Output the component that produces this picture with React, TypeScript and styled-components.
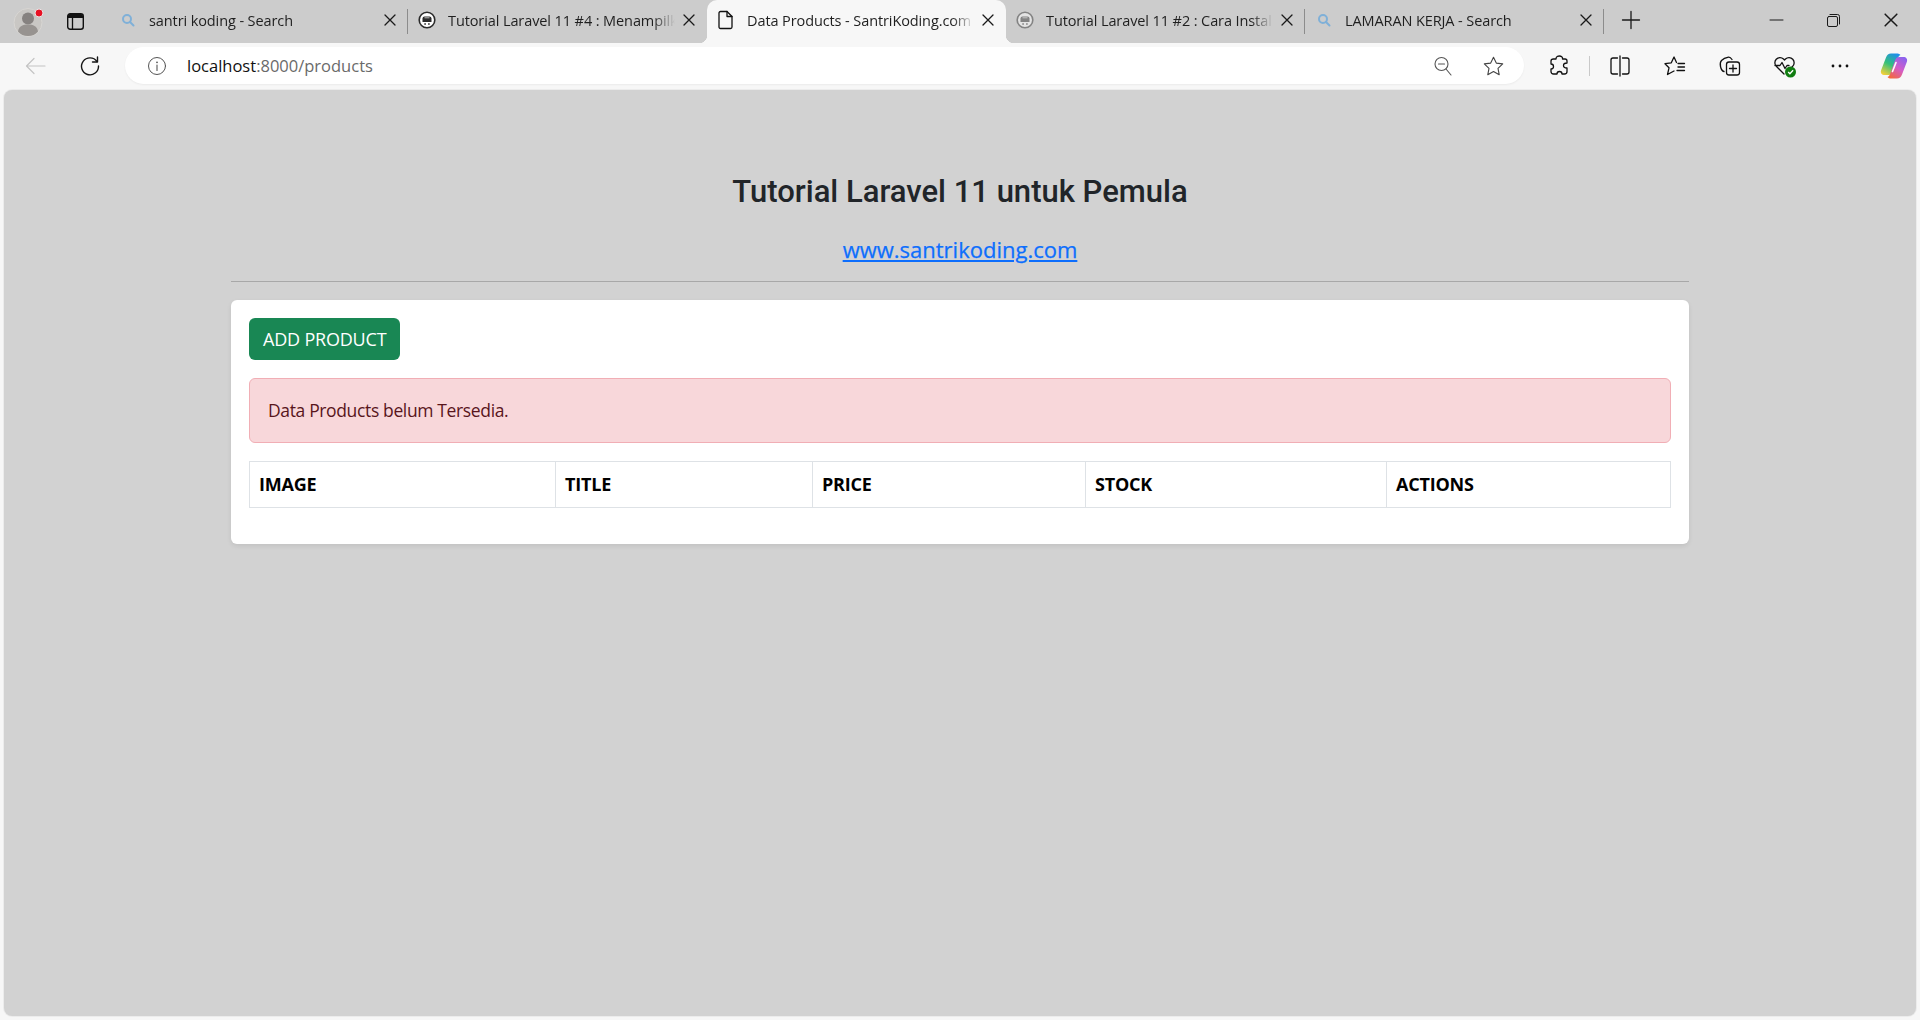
import React from 'react';
import styled, { createGlobalStyle } from 'styled-components';

const GlobalStyle = createGlobalStyle`
  html, body {
    margin: 0;
    height: 100%;
    overflow: hidden;
  }
  #root {
    height: 100%;
  }
  * {
    box-sizing: border-box;
  }
`;

const UI_FONT = `"Open Sans", "Noto Sans", "Liberation Sans", sans-serif`;

const Browser = styled.div`
  display: flex;
  flex-direction: column;
  height: 1020px;
  background: #f7f7f7;
  font-family: ${UI_FONT};
`;

const TabStrip = styled.div`
  display: flex;
  align-items: center;
  height: 43px;
  background: #cccccc;
  flex-shrink: 0;
`;

const ProfileSlot = styled.div`
  width: 55px;
  display: flex;
  justify-content: center;
`;

const VerticalTabsSlot = styled.div`
  width: 54px;
  display: flex;
  padding-left: 12px;
`;

const Tab = styled.div<{ $active?: boolean; $divider?: boolean }>`
  position: relative;
  width: 299px;
  height: 43px;
  display: flex;
  align-items: center;
  padding: 0 12px 3px 10px;
  border-radius: 10px 10px 0 0;
  background: ${(p) => (p.$active ? '#f7f7f7' : 'transparent')};

  ${(p) =>
    p.$divider &&
    `
    &::after {
      content: '';
      position: absolute;
      right: 0;
      top: 9px;
      width: 1px;
      height: 25px;
      background: #8c8c8c;
    }
  `}

  ${(p) =>
    p.$active &&
    `
    &::before,
    &::after {
      content: '';
      position: absolute;
      bottom: 0;
      width: 8px;
      height: 8px;
    }
    &::before {
      left: -8px;
      background: radial-gradient(circle at 0 0, transparent 8px, #f7f7f7 8.5px);
    }
    &::after {
      right: -8px;
      background: radial-gradient(circle at 100% 0, transparent 8px, #f7f7f7 8.5px);
    }
  `}
`;

const TabIcon = styled.div<{ $dim?: boolean }>`
  width: 18px;
  height: 18px;
  display: flex;
  align-items: center;
  justify-content: center;
  flex-shrink: 0;
  opacity: ${(p) => (p.$dim ? 0.45 : 1)};
`;

const TabTitle = styled.div`
  flex: 1;
  min-width: 0;
  margin-left: 12px;
  font-size: 14.5px;
  letter-spacing: -0.1px;
  color: #1f1f1f;
  white-space: nowrap;
  overflow: hidden;
  -webkit-mask-image: linear-gradient(to right, #000 calc(100% - 22px), transparent);
  mask-image: linear-gradient(to right, #000 calc(100% - 22px), transparent);
`;

const TabClose = styled.div`
  width: 12px;
  height: 12px;
  margin-left: 8px;
  display: flex;
  flex-shrink: 0;
`;

const NewTabSlot = styled.div`
  width: 54px;
  display: flex;
  justify-content: center;
  padding-bottom: 3px;
`;

const WindowControls = styled.div`
  margin-left: auto;
  display: flex;
  align-items: center;
  padding-bottom: 3px;
`;

const WindowButton = styled.div`
  width: 57.5px;
  display: flex;
  justify-content: center;
`;

const Toolbar = styled.div`
  display: flex;
  align-items: center;
  height: 47px;
  flex-shrink: 0;
  padding: 0 0 2px 8px;
`;

const ToolSlot = styled.div<{ $width?: number; $nudge?: number }>`
  width: ${(p) => p.$width ?? 55}px;
  height: 36px;
  display: flex;
  align-items: center;
  justify-content: center;
  flex-shrink: 0;
  padding-right: ${(p) => p.$nudge ?? 0}px;
`;

const AddressBar = styled.div`
  width: 1399px;
  height: 37px;
  margin: 0 7px;
  border-radius: 19px;
  background: #ffffff;
  box-shadow: 0 1px 2px rgba(0, 0, 0, 0.05);
  display: flex;
  align-items: center;
  flex-shrink: 0;
  padding: 0 20px 0 22px;
`;

const Url = styled.div`
  margin-left: 20px;
  flex: 1;
  font-size: 16.5px;
  color: #6a6a6a;
`;

const UrlHost = styled.span`
  color: #111111;
`;

const AddressActions = styled.div`
  display: flex;
  align-items: center;
  gap: 31px;
`;

const ToolDivider = styled.div`
  width: 1px;
  height: 20px;
  background: #c9c9c9;
  margin: 0 2px 0 3px;
`;

const Viewport = styled.main`
  flex: 1;
  margin: 0 4px 4px;
  background: #d2d2d2;
  border-radius: 8px;
  box-shadow: 0 0 0 1px #ececec;
  min-height: 0;
`;

const Container = styled.div`
  width: 1458px;
  margin: 0 auto;
  padding-top: 79px;
`;

const PageHeader = styled.div`
  text-align: center;
`;

const PageTitle = styled.h3`
  margin: 0 0 20px;
  font-family: Roboto, ${UI_FONT};
  font-size: 31px;
  line-height: 46px;
  font-weight: 500;
  color: #212529;
`;

const SiteLink = styled.a`
  display: block;
  width: fit-content;
  margin: 0 auto;
  font-size: 22px;
  line-height: 29px;
  font-weight: 400;
  color: #0d6efd;
  text-decoration: underline;
  -webkit-text-stroke: 0.25px #0d6efd;
`;

const Rule = styled.hr`
  margin: 17px 0 18px;
  border: 0;
  border-top: 1px solid #a8a8a8;
`;

const Card = styled.div`
  height: 244px;
  background: #ffffff;
  border-radius: 6px;
  box-shadow: 0 2px 5px rgba(0, 0, 0, 0.08);
  padding: 18px;
`;

const AddButton = styled.a`
  display: inline-block;
  height: 42px;
  padding: 0 14px;
  line-height: 42px;
  background: #198754;
  border-radius: 6px;
  font-size: 18px;
  color: #ffffff;
  letter-spacing: -0.2px;
`;

const Alert = styled.div`
  height: 65px;
  margin-top: 18px;
  padding: 0 18px 2px;
  display: flex;
  align-items: center;
  border: 1px solid #f1aeb5;
  border-radius: 6px;
  background: #f8d7da;
  color: #58151c;
  font-size: 17.5px;
  letter-spacing: -0.36px;
`;

const Table = styled.table`
  width: 1421px;
  margin-top: 18px;
  border-collapse: collapse;
  table-layout: fixed;
`;

const Col = styled.col<{ $w: number }>`
  width: ${(p) => p.$w}px;
`;

const HeadCell = styled.th`
  height: 46px;
  padding: 0 9px 1px;
  border: 1px solid #dee2e6;
  font-size: 18px;
  font-weight: 700;
  text-align: left;
  color: #000000;
  letter-spacing: -0.2px;
`;

const Svg = styled.svg`
  display: block;
  overflow: visible;
`;

const stroke = {
  fill: 'none',
  stroke: 'currentColor',
  strokeLinecap: 'round' as const,
  strokeLinejoin: 'round' as const,
};

const Avatar = () => (
  <Svg width={30} height={30} viewBox="0 0 30 30">
    <circle cx="15" cy="15.500" r="14" fill="#c9c7c4" stroke="#d8d6d3" />
    <circle cx="15" cy="11.500" r="6" fill="#868280" />
    <path d="M5 24.500c1-5.500 5-7 10-7s9 1.500 10 7c-2.500 3-6 4.500-10 4.500s-7.500-1.500-10-4.500z" fill="#979390" />
    <circle cx="26" cy="6" r="4" fill="#e81123" stroke="#e6e6e6" strokeWidth="1" />
  </Svg>
);

const VerticalTabsIcon = () => (
  <Svg width={17} height={17} viewBox="0 0 17 17" color="#111">
    <rect x="0.700" y="0.700" width="15.600" height="15.600" rx="2.500" {...stroke} strokeWidth={1.400} />
    <path d="M1 3a2 2 0 0 1 2-2h11a2 2 0 0 1 2 2v2H1z" fill="#111" />
    <path d="M5.500 5v11" {...stroke} strokeWidth={1.300} />
  </Svg>
);

const SearchFavicon = () => (
  <Svg width={14} height={14} viewBox="0 0 14 14" color="#7fb0d8">
    <circle cx="6" cy="6" r="4" {...stroke} strokeWidth={2} />
    <path d="M9 9l3.500 3.500" {...stroke} strokeWidth={2} />
  </Svg>
);

const SiteFavicon = () => (
  <Svg width={18} height={18} viewBox="0 0 18 18">
    <circle cx="9" cy="9" r="7.800" fill="#fff" stroke="#2b2b2b" strokeWidth="1.600" />
    <path d="M4.500 7.500a2 2 0 0 1 2-2h5a2 2 0 0 1 2 2v3.500h-9z" fill="#2b2b2b" />
    <path d="M6.500 6.800h5" stroke="#bdbdbd" strokeWidth="1" />
    <path d="M6.300 13h1.600M10.100 13h1.600" stroke="#2b2b2b" strokeWidth="1.400" />
  </Svg>
);

const PageFavicon = () => (
  <Svg width={18} height={20} viewBox="0 0 18 20" color="#111">
    <path d="M3.500 1.500h6.500l5 5v10.500a1.500 1.500 0 0 1-1.500 1.500h-10a1.500 1.500 0 0 1-1.500-1.500v-14a1.500 1.500 0 0 1 1.500-1.500z" {...stroke} strokeWidth={1.300} />
    <path d="M10 1.500v5h5" {...stroke} strokeWidth={1.300} />
  </Svg>
);

const CloseIcon = ({ size = 12 }: { size?: number }) => (
  <Svg width={size} height={size} viewBox="0 0 12 12" color="#1a1a1a">
    <path d="M1 1l10 10M11 1l-10 10" {...stroke} strokeWidth={1.300} />
  </Svg>
);

const PlusIcon = () => (
  <Svg width={18} height={18} viewBox="0 0 18 18" color="#1a1a1a">
    <path d="M9 0.500v17M0.500 9h17" {...stroke} strokeWidth={1.300} />
  </Svg>
);

const MinimizeIcon = () => (
  <Svg width={13} height={2} viewBox="0 0 13 2" color="#1a1a1a">
    <path d="M0 1h13" {...stroke} strokeWidth={1} />
  </Svg>
);

const RestoreIcon = () => (
  <Svg width={13} height={13} viewBox="0 0 13 13" color="#1a1a1a">
    <rect x="0.500" y="2.500" width="10" height="10" rx="1.500" {...stroke} />
    <path d="M3 .500h7.500a2 2 0 0 1 2 2v7.500" {...stroke} />
  </Svg>
);

const BackIcon = () => (
  <Svg width={21} height={18} viewBox="0 0 21 18" color="#c4c4c4">
    <path d="M20 9H1.500M9 1.500L1.500 9 9 16.500" {...stroke} strokeWidth={1.200} />
  </Svg>
);

const ReloadIcon = () => (
  <Svg width={20} height={20} viewBox="0 0 20 20" color="#151515">
    <path d="M17 5.500A8.500 8.500 0 1 0 18.500 10" {...stroke} strokeWidth={1.400} />
    <path d="M17.500 1v5h-5" {...stroke} strokeWidth={1.400} />
  </Svg>
);

const InfoIcon = () => (
  <Svg width={20} height={20} viewBox="0 0 20 20" color="#555">
    <circle cx="10" cy="10" r="8.500" {...stroke} strokeWidth={1} />
    <path d="M10 9v5.500" {...stroke} strokeWidth={1.100} />
    <circle cx="10" cy="6.300" r="0.900" fill="#555" />
  </Svg>
);

const ZoomOutIcon = () => (
  <Svg width={18} height={20} viewBox="0 0 18 20" color="#555">
    <circle cx="7.500" cy="8" r="6.500" {...stroke} strokeWidth={1.100} />
    <path d="M4.500 8h6M12 13l5 6" {...stroke} strokeWidth={1.100} />
  </Svg>
);

const StarIcon = () => (
  <Svg width={21} height={20} viewBox="0 0 21 20" color="#444">
    <path d="M10.500 1.200l2.800 5.900 6.400.8-4.700 4.400 1.200 6.400-5.700-3.100-5.700 3.100 1.200-6.400L1.300 7.900l6.400-.8z" {...stroke} strokeWidth={1.100} />
  </Svg>
);

const ExtensionsIcon = () => (
  <Svg width={20} height={21} viewBox="0 0 20 21" color="#111">
    <path d="M7 4C7 1.500 9 1 10.500 1S14 2 13.500 4H16c1.500 0 2 1 2 2v2c-2.500 0-3.500 1-3.500 2.500S15.500 13 18 13v3.500c0 1.500-1 2.500-2.500 2.500H13c0-1.500-1-2.500-2.500-2.500S8 17.500 8 19H4.500C3 19 2 18 2 16.500V14c1.500 0 2.500-1 2.500-2.500S3.500 9 2 9V6c0-1 1-2 2.500-2z" {...stroke} strokeWidth={1.300} />
  </Svg>
);

const SplitIcon = () => (
  <Svg width={20} height={22} viewBox="0 0 20 22" color="#111">
    <path d="M7.500 3H3a2 2 0 0 0-2 2v12a2 2 0 0 0 2 2h4.500M12.500 3H17a2 2 0 0 1 2 2v12a2 2 0 0 1-2 2h-4.500M10 1v20" {...stroke} strokeWidth={1.300} />
  </Svg>
);

const FavoritesIcon = () => (
  <Svg width={21} height={20} viewBox="0 0 21 20" color="#111">
    <path d="M12.500 6.500L10 1 7.300 6.800 1 7.700l4 4.100-1.500 6.700 6.500-3.500M14 7.500h6.500M14 11h6.500M13 14.500h7.500" {...stroke} strokeWidth={1.300} />
  </Svg>
);

const CollectionsIcon = () => (
  <Svg width={21} height={20} viewBox="0 0 21 20" color="#111">
    <rect x="7.500" y="6" width="13" height="13" rx="2.500" {...stroke} strokeWidth={1.300} />
    <path d="M14 9v7M10.500 12.500h7M5 15.500C3 15 2 13 1.500 10.500 1 8 1 6 2.500 4.500 4 3 8 1.500 9.500 1.200 11 1 12 2 13 3.500" {...stroke} strokeWidth={1.300} />
  </Svg>
);

const HealthIcon = () => (
  <Svg width={24} height={24} viewBox="0 0 24 24" color="#111">
    <path d="M11 20L3.500 12.500a5 5 0 0 1 7-7.500l1 1 1-1a5 5 0 0 1 7 7.500L18 14M2 11.500h5l2-3 3 6 2-3h2" {...stroke} strokeWidth={1.300} />
    <circle cx="17.500" cy="18" r="5.500" fill="#107c10" />
    <path d="M15.200 18l1.700 1.700 3.200-3.400" fill="none" stroke="#fff" strokeWidth="1.400" />
  </Svg>
);

const MoreIcon = () => (
  <Svg width={18} height={4} viewBox="0 0 18 4" color="#111">
    <circle cx="2" cy="2" r="1.400" fill="#111" />
    <circle cx="9" cy="2" r="1.400" fill="#111" />
    <circle cx="16" cy="2" r="1.400" fill="#111" />
  </Svg>
);

const CopilotIcon = () => (
  <Svg width={28} height={26} viewBox="0 0 28 26">
    <defs>
      <linearGradient id="cpA" x1="0.700" y1="0" x2="0.200" y2="1">
        <stop offset="0" stopColor="#1f8fe8" />
        <stop offset="0.500" stopColor="#35c07a" />
        <stop offset="1" stopColor="#f3d03a" />
      </linearGradient>
      <linearGradient id="cpB" x1="0.800" y1="0" x2="0.200" y2="1">
        <stop offset="0" stopColor="#8a63ee" />
        <stop offset="0.500" stopColor="#d45cc8" />
        <stop offset="1" stopColor="#f4683a" />
      </linearGradient>
    </defs>
    <path d="M17 .5H11C8.500 .5 7 2 6 4.500L1.200 17C0 20 2 22 4.500 22H9c2 0 3-1 4-3.500L17.500 6c.7-2 1.500-3.500 3-4-1-1-2-1.500-3.500-1.500z" fill="url(#cpA)" />
    <path d="M11 25.500h6c2.500 0 4-1.500 5-4L26.800 9C28 6 26 4 23.500 4H19c-2 0-3 1-4 3.500L10.500 20c-.7 2-1.500 3.500-3 4 1 1 2 1.500 3.500 1.500z" fill="url(#cpB)" />
    <path d="M16 9.500L12.500 18.500" stroke="#fff" strokeWidth="1.600" strokeLinecap="round" />
  </Svg>
);

const tabs = [
  { title: 'santri koding - Search', icon: <SearchFavicon />, divider: true },
  { title: 'Tutorial Laravel 11 #4 : Menampilkan Data', icon: <SiteFavicon /> },
  { title: 'Data Products - SantriKoding.com', icon: <PageFavicon />, active: true },
  { title: 'Tutorial Laravel 11 #2 : Cara Install', icon: <SiteFavicon />, dim: true, divider: true },
  { title: 'LAMARAN KERJA - Search', icon: <SearchFavicon />, divider: true },
];

const columns = [
  { label: 'IMAGE', width: 306 },
  { label: 'TITLE', width: 257 },
  { label: 'PRICE', width: 273 },
  { label: 'STOCK', width: 301 },
  { label: 'ACTIONS', width: 284 },
];

export default function App() {
  return (
    <>
      <GlobalStyle />
      <Browser>
        <TabStrip>
          <ProfileSlot>
            <Avatar />
          </ProfileSlot>
          <VerticalTabsSlot>
            <VerticalTabsIcon />
          </VerticalTabsSlot>
          {tabs.map((tab) => (
            <Tab key={tab.title} $active={tab.active} $divider={tab.divider}>
              <TabIcon $dim={tab.dim}>{tab.icon}</TabIcon>
              <TabTitle>{tab.title}</TabTitle>
              <TabClose>
                <CloseIcon />
              </TabClose>
            </Tab>
          ))}
          <NewTabSlot>
            <PlusIcon />
          </NewTabSlot>
          <WindowControls>
            <WindowButton>
              <MinimizeIcon />
            </WindowButton>
            <WindowButton>
              <RestoreIcon />
            </WindowButton>
            <WindowButton>
              <CloseIcon size={14} />
            </WindowButton>
          </WindowControls>
        </TabStrip>

        <Toolbar>
          <ToolSlot>
            <BackIcon />
          </ToolSlot>
          <ToolSlot $nudge={2}>
            <ReloadIcon />
          </ToolSlot>
          <AddressBar>
            <InfoIcon />
            <Url>
              <UrlHost>localhost</UrlHost>:8000/products
            </Url>
            <AddressActions>
              <ZoomOutIcon />
              <StarIcon />
            </AddressActions>
          </AddressBar>
          <ToolSlot>
            <ExtensionsIcon />
          </ToolSlot>
          <ToolDivider />
          <ToolSlot>
            <SplitIcon />
          </ToolSlot>
          <ToolSlot>
            <FavoritesIcon />
          </ToolSlot>
          <ToolSlot>
            <CollectionsIcon />
          </ToolSlot>
          <ToolSlot>
            <HealthIcon />
          </ToolSlot>
          <ToolSlot>
            <MoreIcon />
          </ToolSlot>
          <ToolSlot $width={53}>
            <CopilotIcon />
          </ToolSlot>
        </Toolbar>

        <Viewport>
          <Container>
            <PageHeader>
              <PageTitle>Tutorial Laravel 11 untuk Pemula</PageTitle>
              <SiteLink href="#">www.santrikoding.com</SiteLink>
            </PageHeader>
            <Rule />
            <Card>
              <AddButton>ADD PRODUCT</AddButton>
              <Alert>Data Products belum Tersedia.</Alert>
              <Table>
                <colgroup>
                  {columns.map((col) => (
                    <Col key={col.label} $w={col.width} />
                  ))}
                </colgroup>
                <thead>
                  <tr>
                    {columns.map((col) => (
                      <HeadCell key={col.label}>{col.label}</HeadCell>
                    ))}
                  </tr>
                </thead>
              </Table>
            </Card>
          </Container>
        </Viewport>
      </Browser>
    </>
  );
}
